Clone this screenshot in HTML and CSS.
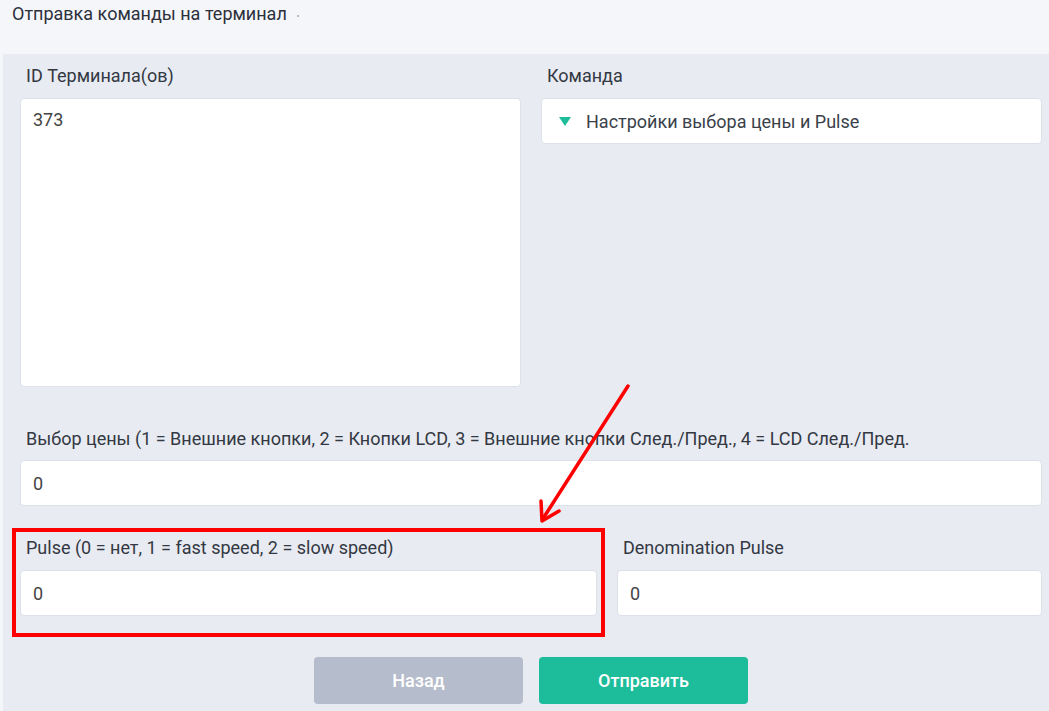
FILE: index.html
```html
<!DOCTYPE html>
<html lang="ru">

<head>
    <meta charset="UTF-8">
    <meta name="viewport" content="width=device-width, initial-scale=1.0">
    <title>Отправка команды на терминал</title>
    <link rel="stylesheet" href="styles.css">
</head>

<body>

    <div class="page-head">
        <span class="page-title">Отправка команды на терминал</span>
        <span class="dot"></span>
    </div>

    <div class="panel">
        <div class="row half">
            <div class="field">
                <label class="label">ID Терминала(ов)</label>
                <textarea class="box area">373</textarea>
            </div>
            <div class="field">
                <label class="label">Команда</label>
                <div class="box select">
                    <span class="caret"></span>
                    <span>Настройки выбора цены и Pulse</span>
                </div>
            </div>
        </div>

        <div class="field price">
            <label class="label">Выбор цены (1 = Внешние кнопки, 2 = Кнопки LCD, 3 = Внешние кнопки След./Пред., 4 = LCD След./Пред.</label>
            <input class="box input" type="text" value="0">
        </div>

        <div class="row pulse">
            <div class="field">
                <label class="label">Pulse (0 = нет, 1 = fast speed, 2 = slow speed)</label>
                <input class="box input" type="text" value="0">
            </div>
            <div class="field">
                <label class="label">Denomination Pulse</label>
                <input class="box input" type="text" value="0">
            </div>
        </div>

        <div class="actions">
            <button class="btn btn-back">Назад</button>
            <button class="btn btn-send">Отправить</button>
        </div>
    </div>

    <!-- annotation -->
    <div class="mark"></div>
    <svg class="arrow" width="110" height="150" viewBox="0 0 110 150">
        <path d="M98 3 L14 134" stroke="#ff0000" stroke-width="3.5" fill="none" stroke-linecap="round" />
        <path d="M11 118 L12 138 L29 128" stroke="#ff0000" stroke-width="3.5" fill="none" stroke-linecap="round" stroke-linejoin="round" />
    </svg>

</body>

</html>
```

FILE: styles.css
```css
body {
    font-family: Roboto, "Noto Sans", Arial, sans-serif;
    font-size: 18px;
    color: #333842;
    margin: 0;
    background-color: #f5f6fa;
    height: 711px;
    overflow: hidden;
    position: relative;
}

.page-head {
    height: 54px;
    padding: 4px 12px 0;
    box-sizing: border-box;
    display: flex;
    align-items: flex-start;
}

.page-title {
    line-height: 20px;
    color: #2c303a;
}

.dot {
    width: 2px;
    height: 2px;
    background-color: #b8bcc6;
    margin: 11px 0 0 10px;
}

.panel {
    margin-left: 3px;
    background-color: #e8ebf2;
    padding: 12px 7px 0 17px;
    height: 657px;
    box-sizing: border-box;
}

.row {
    display: grid;
    gap: 20px;
}

.half {
    grid-template-columns: 1fr 1fr;
}

.pulse {
    grid-template-columns: 577px 1fr;
    margin-top: 32px;
}

.field {
    display: flex;
    flex-direction: column;
}

.label {
    line-height: 20px;
    margin: 0 0 12px 6px;
}

.price {
    margin-top: 42px;
}

.price .label {
    margin-bottom: 11px;
}

.box {
    background-color: #fff;
    border: 1px solid #dde1e9;
    border-radius: 4px;
    box-sizing: border-box;
    font-family: inherit;
    font-size: 18px;
    color: #444;
    outline: none;
}

.area {
    height: 289px;
    resize: none;
    padding: 11px 12px;
    line-height: 20px;
    margin: 0;
}

.input {
    height: 46px;
    padding: 0 12px;
    margin: 0;
    width: 100%;
}

.select {
    height: 46px;
    display: flex;
    align-items: center;
    padding-left: 17px;
    color: #3a3f4a;
}

.caret {
    width: 0;
    height: 0;
    border-left: 6px solid transparent;
    border-right: 6px solid transparent;
    border-top: 9px solid #1dbc9a;
    margin-right: 15px;
    margin-top: 1px;
}

.actions {
    display: flex;
    justify-content: center;
    gap: 16px;
    margin-top: 41px;
}

.btn {
    width: 209px;
    height: 47px;
    border: none;
    border-radius: 4px;
    color: #fff;
    font-family: inherit;
    font-size: 18px;
    font-weight: 500;
    cursor: pointer;
}

.btn-back {
    background-color: #b5bccb;
}

.btn-send {
    background-color: #1dbc9a;
}

/* red highlight drawn over the form */
.mark {
    position: absolute;
    left: 12px;
    top: 528px;
    width: 593px;
    height: 109px;
    border: 4px solid #ff0000;
    box-sizing: border-box;
}

.arrow {
    position: absolute;
    left: 530px;
    top: 383px;
}
```
